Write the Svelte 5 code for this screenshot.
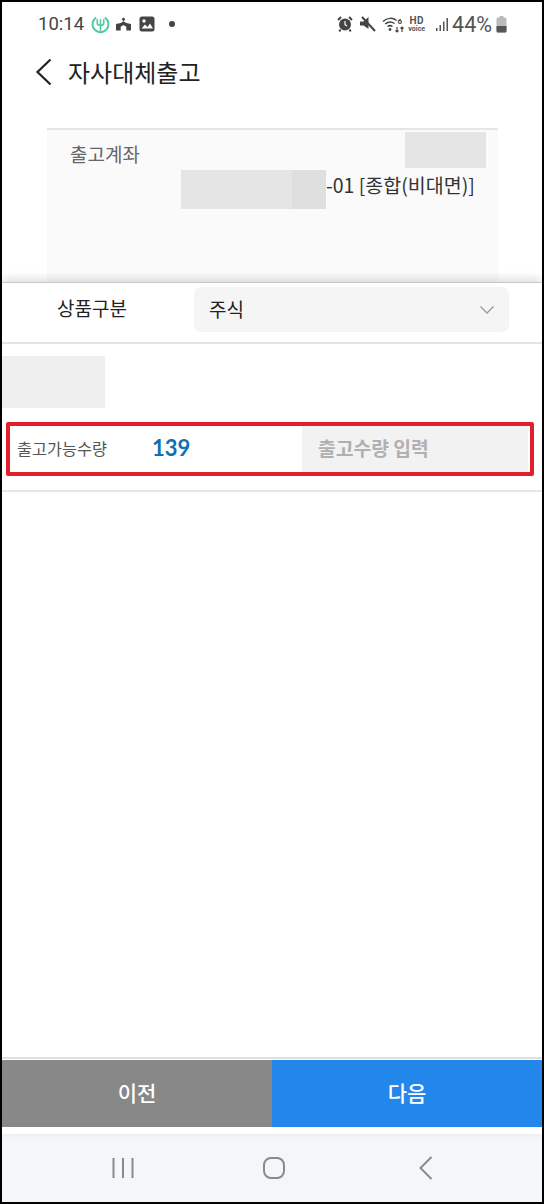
<script>
  let title = "자사대체출고";
</script>

<div class="frame">
  <div class="status">
    <div class="status-left">
      <span class="time">10:14</span>
      <svg class="ic-fork" width="19" height="19" viewBox="0 0 20 20">
        <path d="M14.500 2.600A8.400 8.400 0 1 1 5.500 2.600" fill="none" stroke="#4fc9a4" stroke-width="2" />
        <path d="M6.600 4.500v4.200c0 1.500 1.400 2.300 3.400 2.300s3.400-.8 3.400-2.300V4.500M10 4.500v12" fill="none" stroke="#4fc9a4" stroke-width="1.700" />
      </svg>
      <svg class="ic-tent" width="15" height="14" viewBox="0 0 16 14">
        <path d="M8 0l2 2-2 2-2-2zM0 7l5-1 3-2 3 2 5 1v7h-5V10L8 8 5 10v4H0z" fill="#444" />
      </svg>
      <svg class="ic-pic" width="16" height="16" viewBox="0 0 16 16">
        <rect x="0.500" y="0.500" width="15" height="15" rx="2.500" fill="#444" />
        <path d="M2.500 12.500l3.500-4 2.500 2.500 2.500-3.500 3 5z" fill="#fff" />
        <circle cx="5" cy="5" r="1.700" fill="#fff" />
      </svg>
      <span class="dot"></span>
    </div>
    <div class="status-right">
      <svg class="ic-alarm" width="16" height="16" viewBox="0 0 16 16">
        <circle cx="8" cy="8.500" r="6" fill="#444" />
        <path d="M1 4L4 1M15 4L12 1M3.500 13.500L2.300 15.500M12.500 13.500l1.200 2" stroke="#444" stroke-width="2" fill="none" />
        <path d="M8 5v3.700l2 1.300" stroke="#fff" stroke-width="1.200" fill="none" />
      </svg>
      <svg class="ic-mute" width="16" height="16" viewBox="0 0 16 16">
        <path d="M0 5.500h3.500L8.500 1v12L3.500 9.500H0z" fill="#444" />
        <path d="M2 1L15 15" stroke="#444" stroke-width="2" />
      </svg>
      <svg class="ic-wifi" width="24" height="17" viewBox="0 0 24 17">
        <path d="M1 5.500c4-4 10-4 13.500-1M3.200 8c3-2.500 6.500-2.500 9.300-.5M5.500 10.500c1.700-1.200 3.300-1.200 5 0" fill="none" stroke="#444" stroke-width="1.500" />
        <circle cx="8" cy="13.500" r="1.400" fill="#444" />
        <path d="M15 11v5M13.500 14.500L15 16l1.500-1.500M20 16v-5M18.500 12.500L20 11l1.500 1.500" fill="none" stroke="#444" stroke-width="1.200" />
        <text x="15.500" y="8" class="six">6</text>
      </svg>
      <span class="hd"><b>HD</b><i>voice</i></span>
      <svg class="ic-signal" width="12" height="15" viewBox="0 0 12 15">
        <rect x="0" y="11" width="1.500" height="3" fill="#555" />
        <rect x="3.500" y="8" width="1.500" height="6" fill="#555" />
        <rect x="7" y="4.500" width="1.500" height="9.500" fill="#555" />
        <rect x="10.500" y="1" width="1.500" height="13" fill="#555" />
      </svg>
      <span class="pct">44%</span>
      <svg width="11" height="17" viewBox="0 0 11 17">
        <rect x="3.500" y="0" width="4" height="2" fill="#bbb" />
        <rect x="0.500" y="1.500" width="10" height="15" rx="1.500" fill="#bbb" />
        <path d="M0.500 10h10v5a1.500 1.500 0 0 1-1.500 1.500H2A1.500 1.500 0 0 1 .5 15z" fill="#555" />
      </svg>
    </div>
  </div>

  <div class="header">
    <svg width="18" height="28" viewBox="0 0 18 28">
      <path d="M15.500 1.500L2.500 14l13 12.500" fill="none" stroke="#222" stroke-width="2.200" />
    </svg>
    <h1>{title}</h1>
  </div>

  <div class="card">
    <div class="card-top">
      <span class="card-label">출고계좌</span>
      <span class="mask mask-a"></span>
    </div>
    <div class="account">
      <span class="mask mask-b"></span>
      <span class="mask mask-c"></span>
      <span class="account-text">-01 [종합(비대면)]</span>
    </div>
  </div>

  <div class="sheet">
    <div class="type-row">
      <span class="type-label">상품구분</span>
      <div class="select">
        <span>주식</span>
        <svg width="16" height="10" viewBox="0 0 16 10">
          <path d="M1.500 1.500L8 8l6.500-6.500" fill="none" stroke="#999" stroke-width="1.300" />
        </svg>
      </div>
    </div>
    <div class="mask mask-name"></div>
    <div class="qty-box">
      <span class="qty-label">출고가능수량</span>
      <span class="qty-value">139</span>
      <div class="qty-input"><span>출고수량 입력</span></div>
    </div>
    <div class="divider"></div>
    <div class="spacer"></div>
    <div class="btn-line"></div>
    <div class="buttons">
      <button class="prev">이전</button>
      <button class="next">다음</button>
    </div>
  </div>

  <div class="nav">
    <svg width="22" height="22" viewBox="0 0 22 22">
      <path d="M1.500 1v20M11 1v20M20.500 1v20" stroke="#8a8a8a" stroke-width="2" fill="none" />
    </svg>
    <svg width="24" height="24" viewBox="0 0 24 24">
      <rect x="2" y="2" width="20" height="20" rx="7" fill="none" stroke="#8a8a8a" stroke-width="2" />
    </svg>
    <svg width="16" height="26" viewBox="0 0 16 26">
      <path d="M13.500 2L2.500 13l11 11" fill="none" stroke="#8a8a8a" stroke-width="2" />
    </svg>
  </div>
</div>

<style>
  :global(body) {
    margin: 0;
    background: #000;
  }

  .frame {
    width: 544px;
    height: 1204px;
    box-sizing: border-box;
    border: 2px solid #000;
    background: #fff;
    display: flex;
    flex-direction: column;
    overflow: hidden;
    font-family: "Noto Sans CJK KR", "Noto Sans", sans-serif;
  }

  .status {
    height: 44px;
    padding: 0 35px 0 36px;
    display: flex;
    justify-content: space-between;
    align-items: center;
    color: #444;
  }

  .status-left,
  .status-right {
    display: flex;
    align-items: center;
  }

  .time {
    font: 400 18.500px Roboto, sans-serif;
    color: #444;
  }

  .ic-fork {
    margin-left: 7px;
  }

  .ic-tent {
    margin-left: 6px;
  }

  .ic-pic {
    margin-left: 8px;
  }

  .dot {
    width: 6px;
    height: 6px;
    border-radius: 50%;
    background: #444;
    margin-left: 14px;
  }

  .ic-mute {
    margin-left: 7px;
  }

  .ic-wifi {
    margin-left: 6px;
  }

  .six {
    font: 700 8px Roboto, sans-serif;
    fill: #444;
  }

  .hd {
    display: flex;
    flex-direction: column;
    align-items: center;
    gap: 1px;
    color: #555;
    font-family: Roboto, sans-serif;
    margin-left: 2px;
  }

  .hd b {
    font-size: 10px;
    line-height: 9px;
    letter-spacing: 0.500px;
  }

  .hd i {
    font-style: normal;
    font-weight: 700;
    font-size: 7px;
    line-height: 7px;
  }

  .ic-signal {
    margin-left: 11px;
  }

  .pct {
    font: 400 21.500px Roboto, sans-serif;
    color: #555;
    margin: 0 4px 0 4px;
  }

  .header {
    height: 52px;
    padding-left: 33px;
    display: flex;
    align-items: center;
    gap: 15px;
  }

  h1 {
    margin: 0 0 2px;
    font-size: 24px;
    font-weight: 400;
    color: #222;
  }

  .card {
    margin: 30px 44px 0 45px;
    height: 156px;
    border-top: 2px solid #e6e6e6;
    background: #fafafa;
    box-sizing: border-box;
    padding: 2px 12px 0 23px;
    flex: none;
  }

  .card-top {
    display: flex;
    justify-content: space-between;
    height: 38px;
  }

  .card-label {
    font-size: 19px;
    color: #666;
    margin-top: 8px;
    line-height: 28px;
  }

  .mask {
    display: block;
    background: #e5e5e5;
  }

  .mask-a {
    width: 81px;
    height: 36px;
  }

  .account {
    display: flex;
    align-items: center;
    margin-left: 111px;
    height: 39px;
  }

  .mask-b {
    width: 111px;
    height: 39px;
  }

  .mask-c {
    width: 34px;
    height: 39px;
    background: #dfdfdf;
  }

  .account-text {
    font-size: 19.500px;
    color: #333;
    white-space: nowrap;
    margin-top: -10px;
  }

  .sheet {
    margin-top: -2px;
    flex: 1;
    background: #fff;
    position: relative;
    display: flex;
    flex-direction: column;
    border-top: 1px solid #c8c8c8;
    box-shadow: 0 -3px 9px rgba(0, 0, 0, 0.14);
  }

  .type-row {
    height: 61px;
    flex: none;
    box-sizing: border-box;
    border-bottom: 2px solid #e4e4e4;
    display: flex;
    padding: 4px 33px 0 55px;
  }

  .type-label {
    width: 137px;
    font-size: 19px;
    color: #222;
    line-height: 42px;
  }

  .select {
    flex: 1;
    height: 45px;
    background: #f5f5f5;
    border-radius: 7px;
    display: flex;
    align-items: center;
    justify-content: space-between;
    padding: 0 14px 0 15px;
    font-size: 19px;
    color: #222;
  }

  .select span {
    margin-bottom: 2px;
  }

  .mask-name {
    width: 103px;
    height: 52px;
    margin-top: 12px;
    background: #efefef;
    flex: none;
  }

  .qty-box {
    margin: 14px 8px 0 4px;
    height: 54px;
    box-sizing: border-box;
    border: 4px solid #e0202c;
    border-radius: 2px;
    display: flex;
    align-items: center;
    flex: none;
  }

  .qty-label {
    width: 139px;
    padding-left: 7px;
    box-sizing: border-box;
    font-size: 16.300px;
    color: #555;
    margin-bottom: 2px;
  }

  .qty-value {
    width: 153px;
    font: 700 22px Lato, sans-serif;
    color: #0f70b4;
    padding-left: 3px;
    box-sizing: border-box;
    margin-bottom: 3px;
  }

  .qty-input {
    flex: 1;
    align-self: stretch;
    margin-right: 2px;
    background: #f2f2f2;
    padding-left: 16px;
    font-size: 19.300px;
    font-weight: 700;
    color: #b0b0b0;
    display: flex;
    align-items: center;
  }

  .qty-input span {
    margin-bottom: 3px;
  }

  .divider {
    margin-top: 14px;
    height: 2px;
    background: #e6e6e6;
    flex: none;
  }

  .spacer {
    flex: 1;
  }

  .btn-line {
    height: 2px;
    background: #e0e0e0;
    margin-bottom: 1px;
    flex: none;
  }

  .buttons {
    display: flex;
    height: 67px;
    margin-bottom: 7px;
    flex: none;
  }

  button {
    border: 0;
    padding: 0 0 4px;
    color: #fff;
    font-family: inherit;
    font-size: 21px;
    font-weight: 500;
  }

  .prev {
    width: 270px;
    background: #888;
  }

  .next {
    flex: 1;
    background: #2386ea;
  }

  .nav {
    height: 68px;
    flex: none;
    background: #f5f6f8;
    display: flex;
    align-items: center;
    padding-left: 110px;
    gap: 128px;
  }

  .nav svg:nth-child(3) {
    margin-left: 4px;
  }
</style>
